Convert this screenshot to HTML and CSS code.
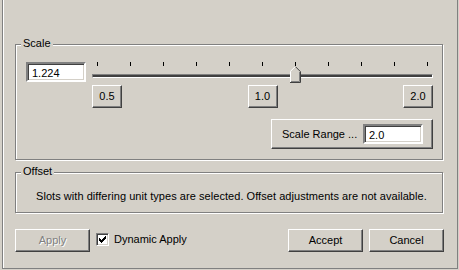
FILE: index.html
```html
<!DOCTYPE html>
<html>
<head>
<meta charset="utf-8">
<link rel="stylesheet" href="styles.css">
</head>
<body>
<div class="frame">
  <div class="group scale-group">
    <span class="legend">Scale</span>
    <div class="scale-row">
      <div class="field field-scale">1.224</div>
      <div class="slider">
        <div class="ticks">
          <i></i><i></i><i></i><i></i><i></i><i></i><i></i><i></i><i></i><i></i><i></i>
        </div>
        <div class="track"></div>
        <svg class="thumb" width="11" height="17" viewBox="0 0 11 17">
          <path d="M0 5 L5 0 L10 5 L10 16 L0 16 Z" fill="#d4d0c8"/>
          <path d="M0.5 16 V5.3 L5.3 0.5" fill="none" stroke="#ffffff" stroke-width="1"/>
          <path d="M5.5 0.7 L10.5 5.7 V16.5 H0" fill="none" stroke="#404040" stroke-width="1"/>
          <path d="M9.5 6 V15.5 H1" fill="none" stroke="#808080" stroke-width="1"/>
        </svg>
        <div class="marks">
          <div class="btn btn-small">0.5</div>
          <div class="btn btn-small">1.0</div>
          <div class="btn btn-small">2.0</div>
        </div>
      </div>
    </div>
    <div class="range-panel">
      <span class="range-label">Scale Range ...</span>
      <div class="field field-range">2.0</div>
    </div>
  </div>
  <div class="group offset-group">
    <span class="legend">Offset</span>
    <p class="offset-text">Slots with differing unit types are selected. Offset adjustments are not available.</p>
  </div>
  <div class="actions">
    <div class="btn btn-wide disabled">Apply</div>
    <label class="check">
      <span class="box">
        <svg width="7" height="7" viewBox="0 0 7 7"><path d="M0 2h1v3h-1z M1 3h1v3h-1z M2 4h1v3h-1z M3 3h1v3h-1z M4 2h1v3h-1z M5 1h1v3h-1z M6 0h1v3h-1z" fill="#000"/></svg>
      </span>
      <span class="check-label">Dynamic Apply</span>
    </label>
    <div class="btn btn-wide accept">Accept</div>
    <div class="btn btn-wide">Cancel</div>
  </div>
</div>
</body>
</html>
```
FILE: styles.css
```css
html, body {
  margin: 0;
  padding: 0;
  background: #d4d0c8;
}
body {
  font-family: "Liberation Sans", Arial, sans-serif;
  font-size: 11px;
  line-height: 13px;
  color: #000;
}
.frame {
  margin-left: 2px;
  width: 456px;
  height: 269px;
  box-sizing: border-box;
  border: 1px solid #808080;
  border-top: 0;
  box-shadow: inset 1px 0 0 #fff;
  padding: 44px 13px 0 12px;
}
.group {
  position: relative;
  box-sizing: border-box;
  width: 428px;
  border: 1px solid #808080;
  box-shadow: inset 1px 1px 0 #fff, 1px 1px 0 #fff;
}
.legend {
  position: absolute;
  top: -8px;
  left: 5px;
  padding: 0 2px;
  background: #d4d0c8;
}
.scale-group {
  height: 116px;
  padding: 17px 0 0 10px;
}
.scale-row {
  display: flex;
  align-items: flex-start;
  gap: 6px;
}
.field {
  box-sizing: border-box;
  width: 60px;
  height: 20px;
  background: #fff;
  border: 2px solid;
  border-color: #808080 #fff #fff #808080;
  box-shadow: inset 1px 1px 0 #404040, inset -1px -1px 0 #d4d0c8;
  padding: 3px 0 0 4px;
  line-height: 13px;
}
.slider {
  position: relative;
  width: 341px;
}
.ticks {
  display: flex;
  justify-content: space-between;
  padding: 0 5px;
  height: 4px;
}
.ticks i {
  display: block;
  width: 1px;
  height: 4px;
  background: #000;
}
.track {
  margin-top: 8px;
  box-sizing: border-box;
  height: 4px;
  border: 1px solid;
  border-color: #808080 #fff #fff #808080;
  background: #404040;
}
.thumb {
  position: absolute;
  left: 198px;
  top: 4px;
  display: block;
}
.marks {
  margin-top: 7px;
  display: flex;
  justify-content: space-between;
}
.btn {
  box-sizing: border-box;
  height: 23px;
  border: 1px solid;
  border-color: #fff #404040 #404040 #fff;
  box-shadow: inset -1px -1px 0 #808080;
  text-align: center;
  line-height: 20px;
}
.btn-small {
  width: 30px;
}
.btn-wide {
  width: 75px;
}
.disabled {
  color: #808080;
  text-shadow: 1px 1px 0 #fff;
}
.range-panel {
  box-sizing: border-box;
  width: 162px;
  height: 30px;
  margin: 11px 0 0 245px;
  border: 1px solid;
  border-color: #fff #404040 #404040 #fff;
  box-shadow: inset -1px -1px 0 #808080;
  display: flex;
  align-items: flex-start;
  justify-content: space-between;
  padding: 4px 9px 0 10px;
}
.range-label {
  padding-top: 4px;
}
.offset-group {
  margin-top: 12px;
  height: 41px;
  padding: 17px 0 0 20px;
}
.offset-text {
  margin: 0;
  letter-spacing: 0.05px;
}
.actions {
  margin-top: 16px;
  display: flex;
  align-items: flex-start;
}
.check {
  display: flex;
  align-items: center;
  margin: 4px 0 0 6px;
  gap: 5px;
}
.box {
  box-sizing: border-box;
  width: 13px;
  height: 13px;
  background: #fff;
  border: 1px solid;
  border-color: #808080 #fff #fff #808080;
  box-shadow: inset 1px 1px 0 #404040, inset -1px -1px 0 #d4d0c8;
  display: flex;
  align-items: center;
  justify-content: center;
}
.box svg {
  display: block;
}
.accept {
  margin-left: auto;
  margin-right: 6px;
}
```
